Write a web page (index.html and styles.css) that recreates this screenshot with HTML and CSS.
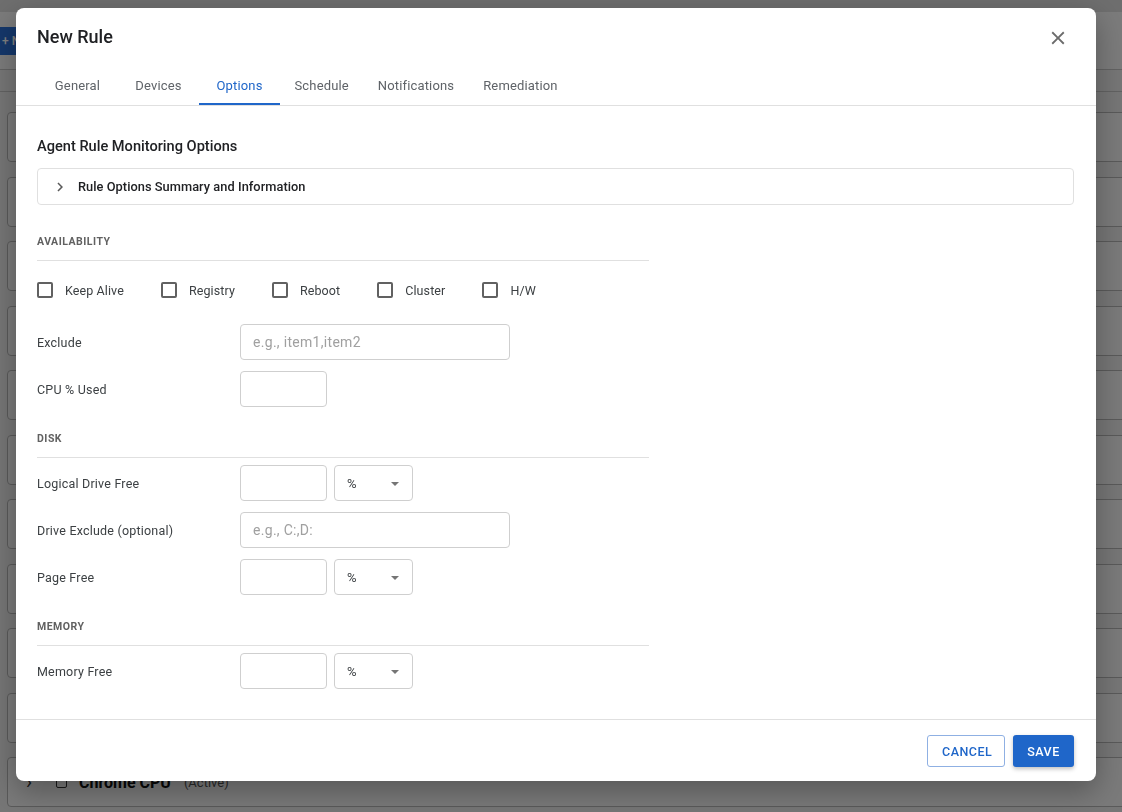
FILE: index.html
```html
<!DOCTYPE html>
<html lang="en">
<head>
<meta charset="utf-8">
<title>New Rule</title>
<link rel="stylesheet" href="styles.css">
</head>
<body>
<div class="page">
  <div class="top-strip"></div>
  <div class="page-header">
    <button class="new-btn">+ New</button>
  </div>
  <div class="page-toolbar"></div>
  <div class="rule-list">
    <div class="rule-card"></div>
    <div class="rule-card"></div>
    <div class="rule-card"></div>
    <div class="rule-card"></div>
    <div class="rule-card"></div>
    <div class="rule-card"></div>
    <div class="rule-card"></div>
    <div class="rule-card"></div>
    <div class="rule-card"></div>
    <div class="rule-card"></div>
    <div class="rule-card">
      <span class="card-chev">&#8250;</span>
      <span class="card-check"></span>
      <span class="card-name">Chrome CPU</span>
      <span class="card-meta">(Active)</span>
    </div>
  </div>
</div>

<div class="backdrop">
  <div class="modal">
    <div class="modal-header">
      <h1 class="modal-title">New Rule</h1>
      <button class="close-btn" aria-label="Close">
        <svg viewBox="0 0 24 24" width="22" height="22"><path d="M19 6.41L17.59 5 12 10.59 6.41 5 5 6.41 10.59 12 5 17.59 6.41 19 12 13.41 17.59 19 19 17.59 13.41 12z" fill="#6b6b6b"/></svg>
      </button>
    </div>
    <div class="tabs">
      <div class="tab">General</div>
      <div class="tab">Devices</div>
      <div class="tab tab-active">Options</div>
      <div class="tab">Schedule</div>
      <div class="tab">Notifications</div>
      <div class="tab">Remediation</div>
    </div>

    <div class="modal-body">
      <h2 class="body-title">Agent Rule Monitoring Options</h2>
      <div class="accordion">
        <svg class="acc-chev" viewBox="0 0 24 24" width="18" height="18"><path d="M10 6L8.59 7.41 13.17 12l-4.58 4.59L10 18l6-6z" fill="#5a5a5a"/></svg>
        <span class="acc-text">Rule Options Summary and Information</span>
      </div>

      <div class="section-title first">AVAILABILITY</div>
      <div class="check-row">
        <label class="check-item"><span class="box"></span>Keep Alive</label>
        <label class="check-item"><span class="box"></span>Registry</label>
        <label class="check-item"><span class="box"></span>Reboot</label>
        <label class="check-item"><span class="box"></span>Cluster</label>
        <label class="check-item"><span class="box"></span>H/W</label>
      </div>
      <div class="rows rows-avail">
        <div class="row">
          <span class="row-label">Exclude</span>
          <div class="field wide"><span class="placeholder">e.g., item1,item2</span></div>
        </div>
        <div class="row">
          <span class="row-label">CPU % Used</span>
          <div class="field small"></div>
        </div>
      </div>

      <div class="section-title">DISK</div>
      <div class="rows">
        <div class="row">
          <span class="row-label">Logical Drive Free</span>
          <div class="field small"></div>
          <div class="select"><span>%</span><span class="arrow"></span></div>
        </div>
        <div class="row">
          <span class="row-label">Drive Exclude (optional)</span>
          <div class="field wide"><span class="placeholder">e.g., C:,D:</span></div>
        </div>
        <div class="row">
          <span class="row-label">Page Free</span>
          <div class="field small"></div>
          <div class="select"><span>%</span><span class="arrow"></span></div>
        </div>
      </div>

      <div class="section-title">MEMORY</div>
      <div class="rows">
        <div class="row">
          <span class="row-label">Memory Free</span>
          <div class="field small"></div>
          <div class="select"><span>%</span><span class="arrow"></span></div>
        </div>
      </div>
    </div>

    <div class="modal-footer">
      <button class="btn btn-outline">CANCEL</button>
      <button class="btn btn-primary">SAVE</button>
    </div>
  </div>
</div>
</body>
</html>
```

FILE: styles.css
```css
* { box-sizing: border-box; }

html, body {
  margin: 0;
  height: 812px;
  overflow: hidden;
}

body {
  font-family: Roboto, "Liberation Sans", Arial, sans-serif;
  background: #ececec;
  color: #222;
}

/* ---------- background page ---------- */
.page {
  width: 100%;
  overflow: hidden;
}

.top-strip {
  height: 12px;
  background: #dcdcdc;
}

.page-header {
  height: 58px;
  background: #f6f6f6;
  border-bottom: 1px solid #c4c4c4;
  padding-top: 15px;
}

.new-btn {
  height: 28px;
  white-space: nowrap;
  border: 0;
  border-radius: 0 4px 4px 0;
  background: #2a6fd6;
  color: #fff;
  font: 500 12px Roboto, "Liberation Sans", sans-serif;
  padding: 0 8px 0 2px;
}

.page-toolbar {
  height: 22px;
  border-bottom: 1px solid #c4c4c4;
}

.rule-list {
  padding: 20px 0 0 7px;
  margin-right: -20px;
  display: flex;
  flex-direction: column;
  gap: 14.5px;
}

.rule-card {
  height: 50px;
  border: 1px solid #b4b4b4;
  border-radius: 4px;
  background: #f4f4f4;
  display: flex;
  align-items: center;
  padding-left: 18px;
}

.card-chev {
  font-size: 20px;
  color: #333;
  width: 30px;
}

.card-check {
  width: 11px;
  height: 11px;
  border: 1.5px solid #333;
  border-radius: 2px;
  margin-right: 12px;
}

.card-name {
  font-size: 16px;
  font-weight: 700;
  color: #111;
  margin-right: 13px;
}

.card-meta {
  font-size: 13px;
  color: #555;
}

/* ---------- overlay + modal ---------- */
.backdrop {
  position: fixed;
  inset: 0;
  background: rgba(0, 0, 0, 0.5);
}

.modal {
  margin: 8px 0 0 16px;
  width: 1080px;
  height: 773px;
  background: #fff;
  border-radius: 8px;
  box-shadow: 0 10px 30px rgba(0, 0, 0, 0.3);
  display: flex;
  flex-direction: column;
  overflow: hidden;
}

.modal-header {
  height: 57px;
  padding: 17px 27px 0 21px;
  display: flex;
  align-items: flex-start;
  justify-content: space-between;
}

.modal-title {
  margin: 0;
  font-size: 18px;
  line-height: 24px;
  font-weight: 500;
  color: #202124;
}

.close-btn {
  width: 22px;
  height: 22px;
  padding: 0;
  margin-top: 2px;
  border: 0;
  background: none;
  display: flex;
}

.tabs {
  display: flex;
  padding-left: 21px;
  border-bottom: 1px solid #e0e0e0;
}

.tab {
  min-width: 81px;
  height: 40px;
  padding: 2px 14.5px 0;
  display: flex;
  align-items: center;
  justify-content: center;
  font-size: 13px;
  letter-spacing: 0.15px;
  color: #5f6368;
  border-bottom: 2px solid transparent;
}

.tab-active {
  color: #1f66c9;
  border-bottom-color: #1f66c9;
}

.modal-body {
  flex: 1;
  padding: 30px 22px 0 21px;
  overflow: hidden;
}

.body-title {
  margin: 0;
  font-size: 14.6px;
  line-height: 20px;
  font-weight: 500;
  color: #202124;
}

.accordion {
  margin-top: 12px;
  height: 37px;
  border: 1px solid #e0e0e0;
  border-radius: 4px;
  display: flex;
  align-items: center;
  padding-left: 13px;
}

.acc-chev {
  margin-right: 9px;
}

.acc-text {
  font-size: 12.8px;
  font-weight: 500;
  letter-spacing: 0.05px;
  color: #202124;
}

.section-title {
  width: 612px;
  margin-top: 24px;
  padding-bottom: 10px;
  border-bottom: 1px solid #e0e0e0;
  font-size: 10.5px;
  line-height: 16px;
  font-weight: 700;
  letter-spacing: 0.5px;
  color: #616161;
}

.section-title.first {
  margin-top: 29px;
}

.check-row {
  margin-top: 19px;
  height: 20px;
  display: flex;
  align-items: center;
  gap: 37px;
}

.check-item {
  display: flex;
  align-items: center;
  gap: 12px;
  font-size: 12.5px;
  letter-spacing: 0.1px;
  color: #3c4043;
}

.box {
  width: 16px;
  height: 16px;
  border: 2px solid #616161;
  border-radius: 2px;
}

.rows {
  padding-top: 7px;
  display: flex;
  flex-direction: column;
  gap: 11px;
}

.rows-avail {
  padding-top: 24px;
}

.row {
  display: flex;
  align-items: center;
  height: 36px;
}

.row-label {
  width: 203px;
  font-size: 12.5px;
  letter-spacing: 0.2px;
  color: #3c4043;
}

.field {
  height: 36px;
  border: 1px solid #cfcfcf;
  border-radius: 4px;
  display: flex;
  align-items: center;
  padding-left: 12px;
}

.field.wide { width: 270px; }
.field.small { width: 87px; }

.placeholder {
  font-size: 14px;
  letter-spacing: 0.3px;
  color: #a0a0a0;
}

.select {
  margin-left: 7px;
  width: 79px;
  height: 36px;
  border: 1px solid #cfcfcf;
  border-radius: 4px;
  display: flex;
  align-items: center;
  justify-content: space-between;
  padding: 0 13px 0 12px;
  font-size: 13px;
  color: #3c4043;
}

.arrow {
  width: 0;
  height: 0;
  border-left: 4px solid transparent;
  border-right: 4px solid transparent;
  border-top: 4px solid #757575;
  margin-top: 2px;
}

.modal-footer {
  height: 62px;
  border-top: 1px solid #e0e0e0;
  display: flex;
  justify-content: flex-end;
  align-items: flex-start;
  gap: 8px;
  padding: 15px 22px 0 0;
}

.btn {
  height: 32px;
  border-radius: 3px;
  font: 500 12.5px Roboto, "Liberation Sans", sans-serif;
  letter-spacing: 0.5px;
  padding: 0 14px;
}

.btn-outline {
  width: 78px;
  background: #fff;
  color: #1f66c9;
  border: 1px solid #8fb0e3;
}

.btn-primary {
  width: 61px;
  background: #1f66c9;
  color: #fff;
  border: 0;
  box-shadow: 0 2px 4px rgba(0, 0, 0, 0.25);
}
```
